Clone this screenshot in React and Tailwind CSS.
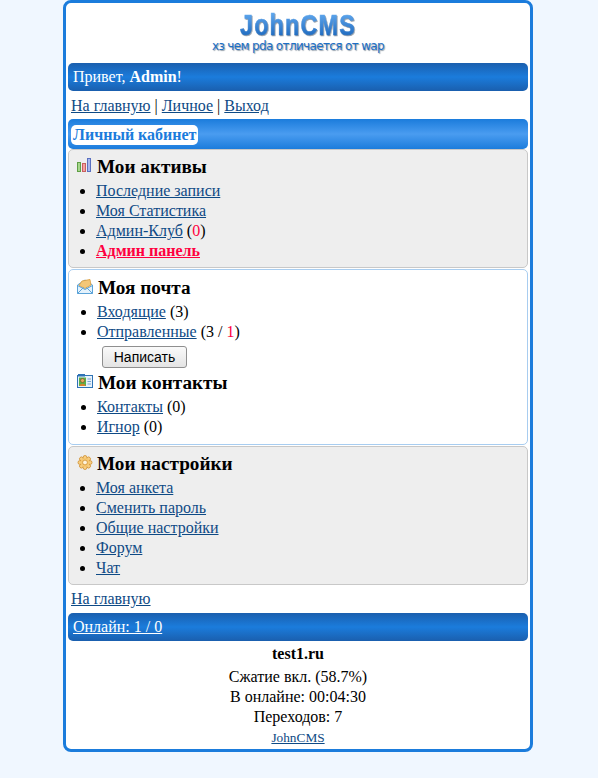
const serif = { fontFamily: '"Liberation Serif", serif' };

const A = ({ children, className = "" }) => (
  <a href="#" className={`text-[#0e4a85] underline ${className}`}>{children}</a>
);

const Bars = () => (
  <svg width="16" height="16" viewBox="0 0 16 16" className="shrink-0">
    <rect x="0.5" y="4.5" width="3" height="9" fill="#a6d68c" stroke="#5f9e45" />
    <rect x="5.5" y="5.5" width="3" height="8" fill="#f0a0a0" stroke="#c86060" />
    <rect x="10.5" y="0.5" width="3" height="13" fill="#a8b8ee" stroke="#5a70c0" />
  </svg>
);

const Mail = () => (
  <svg width="16" height="16" viewBox="0 0 16 16" className="shrink-0">
    <path d="M0.5 6 L8 1 L15.5 6 V14.5 H0.5 Z" fill="#e4f2fc" stroke="#5ba3d8" />
    <path d="M2 6.5 L5 2 L13 0.5 L14 6 L8 9.5 Z" fill="#f4c777" stroke="#d99a3a" strokeWidth="0.8" />
    <path d="M0.5 14.5 L6.5 8.5 M15.5 14.5 L9.5 8.5 M0.5 6.5 L8 10.5 L15.5 6.5" fill="none" stroke="#5ba3d8" />
  </svg>
);

const Contacts = () => (
  <svg width="16" height="16" viewBox="0 0 16 16" className="shrink-0">
    <rect x="0.5" y="1.5" width="15" height="12" fill="#e8f2fb" stroke="#2f73b5" />
    <rect x="1" y="0" width="7" height="2.5" fill="#2f73b5" />
    <rect x="2" y="3.5" width="7" height="8.5" fill="#58b04a" />
    <circle cx="5.5" cy="6.5" r="2" fill="#e8a860" stroke="#7a4a20" strokeWidth="0.6" />
    <path d="M2.5 12 C2.5 9 8.5 9 8.5 12 Z" fill="#d9822b" />
    <path d="M10.5 5h3.5M10.5 7.5h3.5M10.5 10h3.5" stroke="#7aa6d2" strokeWidth="1.2" />
  </svg>
);

const Gear = () => (
  <svg width="16" height="16" viewBox="0 0 16 16" className="shrink-0">
    {[0, 45, 90, 135, 180, 225, 270, 315].map((d) => (
      <circle key={d} cx="8" cy="2.4" r="1.9" fill="#f7cf84" stroke="#d18f2e" strokeWidth="0.8" transform={`rotate(${d} 8 7.5)`} />
    ))}
    <circle cx="8" cy="7.5" r="4.6" fill="#f6c872" />
    <circle cx="8" cy="7.5" r="2.4" fill="#fdf3dc" stroke="#d18f2e" strokeWidth="0.8" />
  </svg>
);

const Heading = ({ icon, children, gap = "gap-1" }) => (
  <div className={`flex items-start ${gap} pl-2 h-[20px]`}>
    <div className="mt-[1px]">{icon}</div>
    <h3 className="font-bold text-[19.2px] leading-[20px] text-black">{children}</h3>
  </div>
);

const Items = ({ items, pad = "pl-[27px]" }) => (
  <ul className={`list-disc ${pad} mt-[4px]`}>
    {items.map((it, i) => (
      <li key={i} className="h-[20px] leading-[20px]">{it}</li>
    ))}
  </ul>
);

const Red = ({ children }) => <span className="text-[#ff0040]">{children}</span>;

export default function App() {
  return (
    <div className="min-h-[778px] bg-[#f0f7ff] text-[16px] text-black overflow-hidden" style={serif}>
      <div className="w-[470px] h-[752px] bg-white border-[3px] border-[#1b7cdc] rounded-[8px] ml-[63px] pt-[9px]">
        <div className="text-center h-[51px]">
          <div
            className="h-[26px] leading-[26px] text-[30px] font-bold tracking-[1.5px] bg-gradient-to-b from-[#62aaf0] to-[#1766bc] bg-clip-text text-transparent [-webkit-text-stroke:0.6px_transparent] [filter:drop-shadow(1px_1px_0px_#8d99a6)]"
            style={{ fontFamily: '"Liberation Sans", sans-serif', transform: "scaleX(0.78)" }}
          >
            JohnCMS
          </div>
          <div
            className="h-[14px] leading-[14px] mt-[1px] text-[12px] text-[#1c6fc6] [text-shadow:1px_1px_1px_#8e9aa6]"
            style={{ fontFamily: '"DejaVu Sans", sans-serif', letterSpacing: "-0.65px" }}
          >
            хз чем pda отличается от wap
          </div>
        </div>

        <div className="mx-[2px] h-[28px] leading-[28px] rounded-[5px] px-[5px] text-white bg-[linear-gradient(to_bottom,#1a5fae,#1b7cdc_50%,#1a5fae)]">
          Привет, <b>Admin</b>!
        </div>

        <div className="h-[28px] leading-[29px] px-[5px]">
          <A>На главную</A> | <A>Личное</A> | <A>Выход</A>
        </div>

        <div className="mx-[2px] h-[30px] rounded-[5px] px-[3px] pt-[4px] bg-[linear-gradient(to_bottom,#1b7cdc,#4a9cf0_50%,#1b7cdc)]">
          <div className="inline-block h-[20px] leading-[20px] bg-white rounded-[5px] px-[2px] font-bold text-[#1b7cdc]">
            Личный кабинет
          </div>
        </div>

        <section className="mx-[2px] h-[119px] bg-[#eeeeee] border border-[#c8c8c8] rounded-[5px] pt-[7px]">
          <Heading icon={<Bars />}>Мои активы</Heading>
          <Items
            items={[
              <A>Последние записи</A>,
              <A>Моя Статистика</A>,
              <><A>Админ-Клуб</A> (<Red>0</Red>)</>,
              <a href="#" className="underline font-bold text-[#ff0040]">Админ панель</a>,
            ]}
          />
        </section>

        <section className="mx-[2px] mt-px h-[176px] bg-white border border-[#a8cdf0] rounded-[5px] pt-[8px]">
          <Heading icon={<Mail />} gap="gap-[5px]">Моя почта</Heading>
          <Items
            pad="pl-[28px]"
            items={[
              <><A>Входящие</A> (3)</>,
              <><A>Отправленные</A> (3 / <Red>1</Red>)</>,
            ]}
          />
          <button
            className="block ml-[33px] mt-[4px] w-[85px] h-[22px] rounded-[3px] border border-[#8f8f8f] bg-gradient-to-b from-[#fafafa] to-[#e4e4e4] text-[14px] text-black"
            style={{ fontFamily: '"Liberation Sans", sans-serif' }}
          >
            Написать
          </button>
          <div className="mt-[5px]">
            <Heading icon={<Contacts />} gap="gap-[5px]">Мои контакты</Heading>
          </div>
          <Items
            pad="pl-[28px]"
            items={[
              <><A>Контакты</A> (0)</>,
              <><A>Игнор</A> (0)</>,
            ]}
          />
        </section>

        <section className="mx-[2px] mt-px h-[139px] bg-[#eeeeee] border border-[#c8c8c8] rounded-[5px] pt-[7px]">
          <Heading icon={<Gear />}>Мои настройки</Heading>
          <Items
            items={[
              <A>Моя анкета</A>,
              <A>Сменить пароль</A>,
              <A>Общие настройки</A>,
              <A>Форум</A>,
              <A>Чат</A>,
            ]}
          />
        </section>

        <div className="h-[28px] leading-[28px] px-[5px]">
          <A>На главную</A>
        </div>

        <div className="mx-[2px] h-[28px] leading-[28px] rounded-[5px] px-[5px] bg-[linear-gradient(to_bottom,#1a5fae,#1b7cdc_50%,#1a5fae)]">
          <a href="#" className="text-white underline">Онлайн: 1 / 0</a>
        </div>

        <div className="text-center pt-[3px]">
          <div className="h-[23px] leading-[20px] font-bold">test1.ru</div>
          <div className="h-[20px] leading-[20px]">Сжатие вкл. (58.7%)</div>
          <div className="h-[20px] leading-[20px]">В онлайне: 00:04:30</div>
          <div className="h-[20px] leading-[20px]">Переходов: 7</div>
          <div className="h-[20px] leading-[22px] text-[13.3px]"><A>JohnCMS</A></div>
        </div>
      </div>
    </div>
  );
}
